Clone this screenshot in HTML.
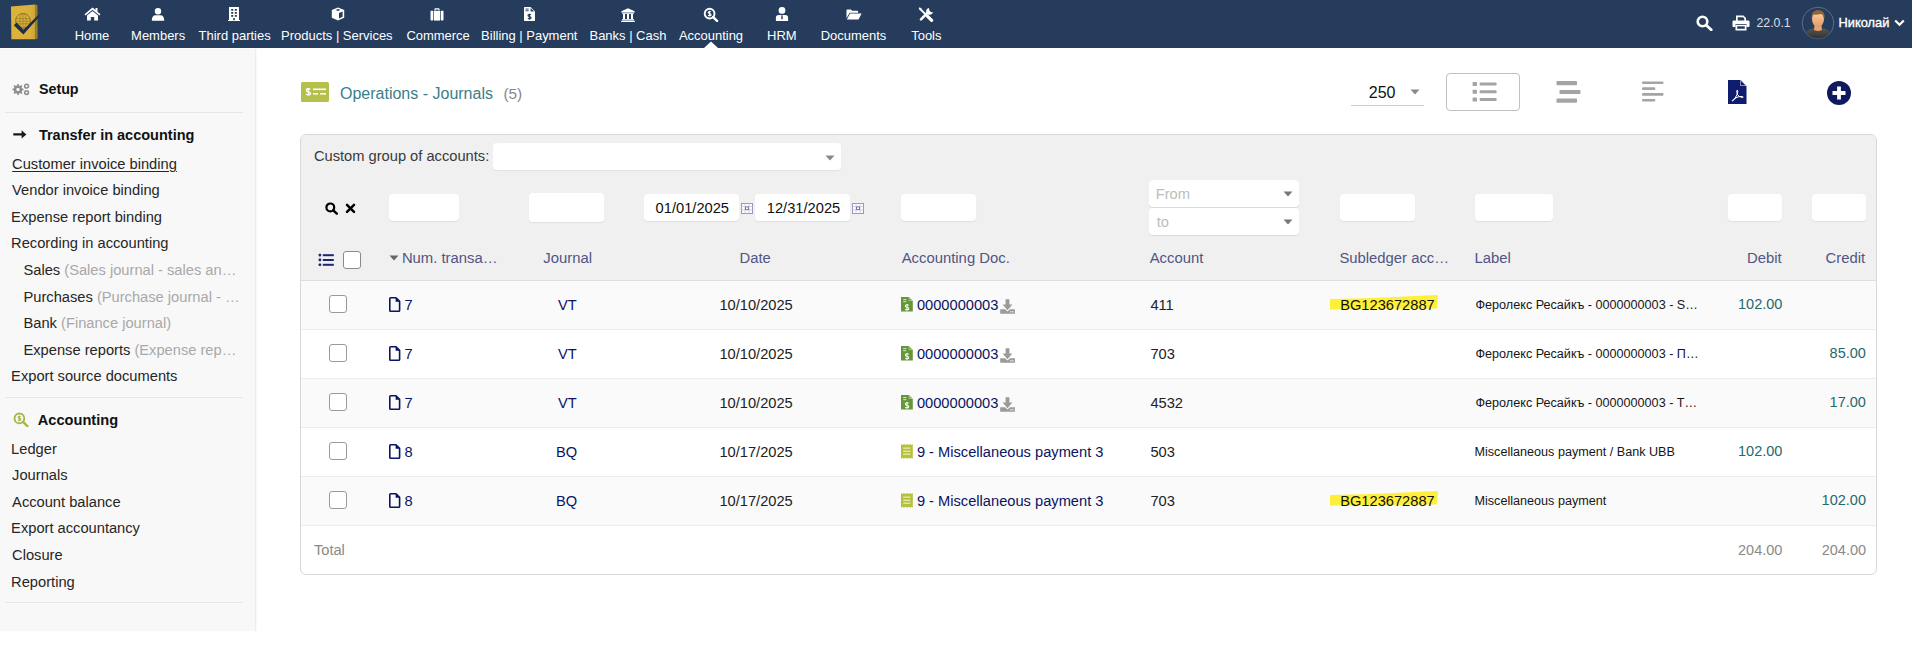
<!DOCTYPE html><html><head><meta charset="utf-8"><style>body{margin:0;width:1912px;height:645px;overflow:hidden;background:#fff;position:relative;font-family:'Liberation Sans', sans-serif} .t{position:absolute;line-height:1;white-space:nowrap}</style></head><body>
<div style="position:absolute;left:0px;top:0px;width:1912px;height:48px;background:#263c5c"></div>
<div style="position:absolute;left:0px;top:49px;width:255px;height:582px;background:#f8f8f8;border-right:1px solid #ececec;box-shadow:1px 0 2px rgba(0,0,0,0.03)"></div>
<svg style="position:absolute;left:9px;top:3px;" width="33" height="38" viewBox="0 0 33 38">
<defs><linearGradient id="lg1" x1="0" y1="0" x2="1" y2="0"><stop offset="0" stop-color="#dcb43c"/><stop offset="0.8" stop-color="#d8b03a"/><stop offset="1" stop-color="#c9a334"/></linearGradient></defs>
<path d="M2 3.6 L26 1.4 L26.4 36.2 L2.4 36.3 Z" fill="url(#lg1)"/>
<path d="M26 1.4 L28.4 2 L28.6 35.6 L26.4 36.2 Z" fill="#9b8431"/>
<circle cx="14" cy="17.8" r="7.4" fill="none" stroke="#8a6c22" stroke-width="0.9"/>
<ellipse cx="14" cy="17.8" rx="3.2" ry="7.4" fill="none" stroke="#9b7a2a" stroke-width="0.7"/>
<path d="M14 10.4 V25.2 M6.8 15.6 H21.2 M6.6 18.2 H21.4 M7 20.8 H21" stroke="#9b7a2a" stroke-width="0.7" fill="none"/>
<path d="M4.8 22.2 L14.4 31.6 L31.4 12.6 L29.4 11.8 L14.4 26.8 L7.6 19.6 Z" fill="#1e2e4a"/>
</svg>
<svg style="position:absolute;left:84px;top:7px;" width="17" height="14" viewBox="0 0 17 14"><path fill="#fff" d="M8.5 0.5 L0.5 7.2 L1.6 8.4 L8.5 2.7 L15.4 8.4 L16.5 7.2 L13.5 4.7 L13.5 1 L11.5 1 L11.5 3 Z"/><path fill="#fff" d="M3 8.6 L8.5 4 L14 8.6 L14 13.5 L10.2 13.5 L10.2 10 L6.8 10 L6.8 13.5 L3 13.5 Z"/></svg>
<svg style="position:absolute;left:151px;top:8px;" width="14" height="13" viewBox="0 0 14 13"><circle fill="#fff" cx="7" cy="3.2" r="3.2"/><path fill="#fff" d="M0.8 12.8 Q0.8 7.3 4.6 7.3 L9.4 7.3 Q13.2 7.3 13.2 12.8 Z"/></svg>
<svg style="position:absolute;left:228px;top:7px;" width="12" height="14" viewBox="0 0 12 14"><path fill="#fff" d="M1 0 H11 V13 H12 V14 H0 V13 H1 Z"/><g fill="#263c5c"><rect x="3.2" y="2" width="2" height="1.8"/><rect x="6.8" y="2" width="2" height="1.8"/><rect x="3.2" y="5" width="2" height="1.8"/><rect x="6.8" y="5" width="2" height="1.8"/><rect x="3.2" y="8" width="2" height="1.8"/><rect x="6.8" y="8" width="2" height="1.8"/><rect x="5.2" y="11" width="1.6" height="2.2"/></g></svg>
<svg style="position:absolute;left:331px;top:7px;" width="14" height="14" viewBox="0 0 14 14"><path fill="#fff" d="M7 0.4 L13.2 3 L13.2 10.8 L7 13.6 L0.8 10.8 L0.8 3 Z"/><path fill="#263c5c" d="M4.6 2.9 L7 1.9 L9.4 2.9 L7 3.9 Z"/><path fill="#263c5c" d="M8 6 L11.6 4.4 L11.6 9.8 L8 11.6 Z"/></svg>
<svg style="position:absolute;left:430px;top:8px;" width="14" height="13" viewBox="0 0 14 13"><path fill="#fff" d="M4.5 2.5 V1 Q4.5 0.3 5.2 0.3 H8.8 Q9.5 0.3 9.5 1 V2.5 H8.4 V1.4 H5.6 V2.5 Z"/><rect fill="#fff" x="0.5" y="2.8" width="2.8" height="9.8" rx="0.8"/><rect fill="#fff" x="4" y="2.8" width="6" height="9.8"/><rect fill="#fff" x="10.7" y="2.8" width="2.8" height="9.8" rx="0.8"/></svg>
<svg style="position:absolute;left:524px;top:7px;" width="11" height="14" viewBox="0 0 11 14"><path fill="#fff" d="M0 0.8 Q0 0 0.8 0 H6.6 L11 4.4 V13.2 Q11 14 10.2 14 H0.8 Q0 14 0 13.2 Z"/><path fill="#263c5c" d="M6.6 0 V4.4 H11 L10 4.4 L6.6 1 Z"/><g fill="#263c5c"><rect x="1.5" y="1.6" width="3.2" height="0.9"/><rect x="1.5" y="3.3" width="3.2" height="0.9"/></g><path d="M6.96 7.81 Q6.34 7.36 5.50 7.36 Q4.04 7.36 4.04 8.42 Q4.04 9.26 5.50 9.60 Q7.07 9.94 7.07 10.83 Q7.07 11.84 5.50 11.84 Q4.55 11.84 3.93 11.34" fill="none" stroke="#263c5c" stroke-width="1.2"/><path d="M5.50 6.80 V12.40" stroke="#263c5c" stroke-width="1.08"/></svg>
<svg style="position:absolute;left:621px;top:8px;" width="14" height="14" viewBox="0 0 14 14"><path fill="#fff" d="M7 0.3 L13.6 3.2 V4.4 H0.4 V3.2 Z"/><rect fill="#fff" x="1.2" y="4.8" width="11.6" height="1"/><rect fill="#fff" x="2" y="6" width="2" height="5"/><rect fill="#fff" x="6" y="6" width="2" height="5"/><rect fill="#fff" x="10" y="6" width="2" height="5"/><rect fill="#fff" x="1" y="11.2" width="12" height="1.2"/><rect fill="#fff" x="0.2" y="12.7" width="13.6" height="1.3"/></svg>
<svg style="position:absolute;left:703px;top:7px;" width="16" height="15" viewBox="0 0 16 15"><circle cx="6.6" cy="6.6" r="4.9" fill="none" stroke="#fff" stroke-width="1.9"/><path d="M10.2 10.2 L14 13.8" stroke="#fff" stroke-width="2.5" stroke-linecap="round"/><path d="M8.00 4.87 Q7.41 4.44 6.60 4.44 Q5.20 4.44 5.20 5.47 Q5.20 6.28 6.60 6.60 Q8.11 6.92 8.11 7.79 Q8.11 8.76 6.60 8.76 Q5.68 8.76 5.09 8.27" fill="none" stroke="#fff" stroke-width="1.1"/><path d="M6.60 3.90 V9.30" stroke="#fff" stroke-width="0.99"/></svg>
<svg style="position:absolute;left:704px;top:41px;" width="14" height="7" viewBox="0 0 14 7"><path d="M0 7 L7 0.5 L14 7 Z" fill="#fff"/></svg>
<svg style="position:absolute;left:775px;top:7px;" width="14" height="14" viewBox="0 0 14 14"><circle fill="#fff" cx="7" cy="3.4" r="3.4"/><path fill="#fff" d="M0.9 13.9 V10.6 Q0.9 7.9 3.8 7.9 H10.2 Q13.1 7.9 13.1 10.6 V13.9 Z"/><path fill="#263c5c" d="M6.4 8.2 H7.6 L7.8 11.6 L7 12.6 L6.2 11.6 Z"/></svg>
<svg style="position:absolute;left:846px;top:9px;" width="16" height="11" viewBox="0 0 16 11"><path fill="#fff" d="M0.5 1.2 Q0.5 0.4 1.3 0.4 H4.9 L6.1 1.7 H11.4 Q12.1 1.7 12.1 2.4 V3.7 H3.6 L0.5 9.2 Z"/><path fill="#fff" d="M4 4.6 H15.6 L12.5 10.4 H0.9 Z"/></svg>
<svg style="position:absolute;left:918px;top:7px;" width="16" height="15" viewBox="0 0 16 15"><path d="M2.2 2 L8.6 8.4" stroke="#fff" stroke-width="1.9" stroke-linecap="round"/><path d="M0.6 1.2 L1.6 0.3 L3.6 1.6 L2 3.2 Z" fill="#fff"/><path d="M9.6 9.4 L13.6 13.4" stroke="#fff" stroke-width="3.2" stroke-linecap="round"/><path d="M3 12.4 L10.4 5" stroke="#fff" stroke-width="2.6" stroke-linecap="round"/><path fill="#fff" d="M10.9 1.1 A3.4 3.4 0 1 0 14.9 5.1 L13.1 5.3 L11.4 3.6 Z"/></svg>
<svg style="position:absolute;left:1696px;top:15px;" width="17" height="16" viewBox="0 0 17 16"><circle cx="6.5" cy="6.5" r="4.8" fill="none" stroke="#fff" stroke-width="2.6"/><path d="M10.3 10.3 L15.2 14.8" stroke="#fff" stroke-width="2.8" stroke-linecap="round"/></svg>
<svg style="position:absolute;left:1732px;top:15px;" width="18" height="16" viewBox="0 0 18 16"><path fill="#fff" d="M4 0.5 H11.5 L14 3 V6 H12.3 V3.5 L11 2.2 H5.7 V6 H4 Z"/><path fill="#fff" d="M1.8 5.5 H16.2 Q17.5 5.5 17.5 6.8 V11.2 Q17.5 12 16.7 12 H14.5 V9 H3.5 V12 H1.3 Q0.5 12 0.5 11.2 V6.8 Q0.5 5.5 1.8 5.5 Z"/><path fill="#fff" d="M3.5 9.8 H14.5 V15.5 H3.5 Z"/><path fill="#263c5c" d="M5.2 11.3 H12.8 V13.8 H5.2 Z"/></svg>
<svg style="position:absolute;left:1801px;top:6px;" width="34" height="34" viewBox="0 0 34 34">
<defs><clipPath id="avc"><circle cx="17" cy="17" r="15.5"/></clipPath>
<linearGradient id="skin" x1="0" y1="0" x2="0" y2="1"><stop offset="0" stop-color="#ffd2a8"/><stop offset="1" stop-color="#e49a62"/></linearGradient>
<linearGradient id="body" x1="0" y1="0" x2="0" y2="1"><stop offset="0" stop-color="#555"/><stop offset="1" stop-color="#2b2b2b"/></linearGradient></defs>
<circle cx="17" cy="17" r="15.8" fill="#263c5c" stroke="#5a6d8a" stroke-width="1"/>
<g clip-path="url(#avc)">
<path d="M3 34 Q3 24 11 22.5 L23 22.5 Q31 24 31 34 Z" fill="url(#body)"/>
<path d="M13.5 19 L20.5 19 L21 24 Q17 26 13 24 Z" fill="#e6a06a"/>
<ellipse cx="17" cy="13" rx="6" ry="8" fill="url(#skin)"/>
<path d="M10.5 12 Q10 5 16 4 Q23 3.5 23.8 10 Q23.5 12 23 13 Q22.5 8.5 20 8 Q15 9 12 8.5 Q11 10 10.9 13 Z" fill="#8d6636"/>
</g></svg>
<svg style="position:absolute;left:1894px;top:19px;" width="11" height="8" viewBox="0 0 11 8"><path d="M1.2 1.5 L5.5 5.8 L9.8 1.5" fill="none" stroke="#fff" stroke-width="2.2"/></svg>
<div class="t" style="left:74.70px;top:29.00px;font-size:12.98px;font-weight:400;color:#ffffff;">Home</div>
<div class="t" style="left:131.10px;top:29.00px;font-size:12.98px;font-weight:400;color:#ffffff;">Members</div>
<div class="t" style="left:198.60px;top:29.00px;font-size:12.98px;font-weight:400;color:#ffffff;">Third parties</div>
<div class="t" style="left:281.10px;top:29.00px;font-size:12.98px;font-weight:400;color:#ffffff;">Products | Services</div>
<div class="t" style="left:406.40px;top:29.00px;font-size:12.98px;font-weight:400;color:#ffffff;">Commerce</div>
<div class="t" style="left:481.10px;top:29.00px;font-size:12.98px;font-weight:400;color:#ffffff;">Billing | Payment</div>
<div class="t" style="left:589.50px;top:29.00px;font-size:12.98px;font-weight:400;color:#ffffff;">Banks | Cash</div>
<div class="t" style="left:678.90px;top:29.00px;font-size:12.98px;font-weight:400;color:#ffffff;">Accounting</div>
<div class="t" style="left:767.10px;top:29.00px;font-size:12.98px;font-weight:400;color:#ffffff;">HRM</div>
<div class="t" style="left:820.70px;top:29.00px;font-size:12.98px;font-weight:400;color:#ffffff;">Documents</div>
<div class="t" style="left:911.20px;top:29.00px;font-size:12.98px;font-weight:400;color:#ffffff;">Tools</div>
<div class="t" style="left:1756.50px;top:17.00px;font-size:12.3px;font-weight:400;color:rgba(255,255,255,0.85);">22.0.1</div>
<div class="t" style="left:1838.60px;top:17.00px;font-size:12.8px;font-weight:400;color:#ffffff;-webkit-text-stroke:0.35px #fff">Николай</div>
<svg style="position:absolute;left:12px;top:83px;" width="18" height="14" viewBox="0 0 18 14"><path d="M10.10 5.60 L11.55 5.78 L11.55 7.22 L10.10 7.40 L9.54 8.76 L10.44 9.91 L9.41 10.94 L8.26 10.04 L6.90 10.60 L6.72 12.05 L5.28 12.05 L5.10 10.60 L3.74 10.04 L2.59 10.94 L1.56 9.91 L2.46 8.76 L1.90 7.40 L0.45 7.22 L0.45 5.78 L1.90 5.60 L2.46 4.24 L1.56 3.09 L2.59 2.06 L3.74 2.96 L5.10 2.40 L5.28 0.95 L6.72 0.95 L6.90 2.40 L8.26 2.96 L9.41 2.06 L10.44 3.09 L9.54 4.24 Z" fill="#8c8c8c"/><circle cx="6" cy="6.5" r="1.7" fill="#f8f8f8"/><circle cx="14.6" cy="3.2" r="1.9" fill="none" stroke="#8c8c8c" stroke-width="1.5"/><circle cx="14.6" cy="9.6" r="1.9" fill="none" stroke="#8c8c8c" stroke-width="1.5"/></svg>
<div class="t" style="left:38.90px;top:82.00px;font-size:14.3px;font-weight:700;color:#111;">Setup</div>
<div style="position:absolute;left:5px;top:112px;width:238px;height:1px;background:#e6e6e6"></div>
<svg style="position:absolute;left:13px;top:130px;" width="14" height="9" viewBox="0 0 14 9"><path d="M0.3 3.3 H8.6 V0.3 L13.4 4.4 L8.6 8.5 V5.5 H0.3 Z" fill="#1a1a1a"/></svg>
<div class="t" style="left:38.90px;top:128.00px;font-size:14.5px;font-weight:700;color:#111;">Transfer in accounting</div>
<div class="t" style="left:12.10px;top:157.00px;font-size:14.68px;font-weight:400;color:#262626;text-decoration:underline;text-underline-offset:2px">Customer invoice binding</div>
<div class="t" style="left:12.10px;top:183.00px;font-size:14.68px;font-weight:400;color:#262626;">Vendor invoice binding</div>
<div class="t" style="left:11.10px;top:210.00px;font-size:14.68px;font-weight:400;color:#262626;">Expense report binding</div>
<div class="t" style="left:11.10px;top:236.00px;font-size:14.68px;font-weight:400;color:#262626;">Recording in accounting</div>
<div class="t" style="left:23.50px;top:263.00px;font-size:14.68px;font-weight:400;color:#262626;">Sales <span style="color:#a8a8a8">(Sales journal - sales an…</span></div>
<div class="t" style="left:23.50px;top:290.00px;font-size:14.68px;font-weight:400;color:#262626;">Purchases <span style="color:#a8a8a8">(Purchase journal - …</span></div>
<div class="t" style="left:23.50px;top:316.00px;font-size:14.68px;font-weight:400;color:#262626;">Bank <span style="color:#a8a8a8">(Finance journal)</span></div>
<div class="t" style="left:23.50px;top:343.00px;font-size:14.68px;font-weight:400;color:#262626;">Expense reports <span style="color:#a8a8a8">(Expense rep…</span></div>
<div class="t" style="left:11.10px;top:369.00px;font-size:14.68px;font-weight:400;color:#262626;">Export source documents</div>
<div style="position:absolute;left:5px;top:397px;width:238px;height:1px;background:#e6e6e6"></div>
<svg style="position:absolute;left:12.5px;top:411.5px;" width="16" height="15" viewBox="0 0 17 16"><circle cx="6.8" cy="6.8" r="5.2" fill="none" stroke="#a3b84a" stroke-width="2"/><path d="M10.6 10.6 L15.3 15" stroke="#a3b84a" stroke-width="2.6" stroke-linecap="round"/><path d="M8.26 5.01 Q7.64 4.56 6.80 4.56 Q5.34 4.56 5.34 5.62 Q5.34 6.46 6.80 6.80 Q8.37 7.14 8.37 8.03 Q8.37 9.04 6.80 9.04 Q5.85 9.04 5.23 8.54" fill="none" stroke="#a3b84a" stroke-width="1.1"/><path d="M6.80 4.00 V9.60" stroke="#a3b84a" stroke-width="0.99"/></svg>
<div class="t" style="left:37.80px;top:413.00px;font-size:14.6px;font-weight:700;color:#111;">Accounting</div>
<div class="t" style="left:11.10px;top:442.00px;font-size:14.68px;font-weight:400;color:#262626;">Ledger</div>
<div class="t" style="left:12.10px;top:468.00px;font-size:14.68px;font-weight:400;color:#262626;">Journals</div>
<div class="t" style="left:12.10px;top:495.00px;font-size:14.68px;font-weight:400;color:#262626;">Account balance</div>
<div class="t" style="left:11.10px;top:521.00px;font-size:14.68px;font-weight:400;color:#262626;">Export accountancy</div>
<div class="t" style="left:12.10px;top:548.00px;font-size:14.68px;font-weight:400;color:#262626;">Closure</div>
<div class="t" style="left:11.10px;top:575.00px;font-size:14.68px;font-weight:400;color:#262626;">Reporting</div>
<div style="position:absolute;left:5px;top:602px;width:238px;height:1px;background:#e6e6e6"></div>
<svg style="position:absolute;left:301px;top:82px;" width="28" height="20" viewBox="0 0 28 20"><rect x="0" y="0" width="28" height="20" rx="1.5" fill="#b5c04a"/><path d="M9.28 7.37 Q8.44 6.76 7.30 6.76 Q5.32 6.76 5.32 8.20 Q5.32 9.34 7.30 9.80 Q9.43 10.26 9.43 11.47 Q9.43 12.84 7.30 12.84 Q6.01 12.84 5.17 12.16" fill="none" stroke="#fff" stroke-width="1.35"/><path d="M7.30 6.00 V13.60" stroke="#fff" stroke-width="1.22"/><rect x="12" y="6.5" width="13" height="1.6" fill="#fff"/><rect x="12" y="11" width="5" height="1.6" fill="#fff"/><rect x="19" y="11" width="6" height="1.6" fill="#fff"/></svg>
<div class="t" style="left:340.00px;top:85.50px;font-size:16px;font-weight:400;color:#3a7e88;">Operations - Journals</div>
<div class="t" style="left:503.40px;top:85.50px;font-size:15.4px;font-weight:400;color:#888;">(5)</div>
<div class="t" style="left:1368.80px;top:85.00px;font-size:16px;font-weight:400;color:#111;">250</div>
<svg style="position:absolute;left:1410px;top:89px;" width="10" height="6" viewBox="0 0 10 6"><path d="M0.5 0.5 H9.5 L5 5.5 Z" fill="#888"/></svg>
<div style="position:absolute;left:1351px;top:105px;width:73px;height:1px;background:#ccc"></div>
<div style="position:absolute;left:1446px;top:73px;width:72px;height:36px;border:1px solid #c0c0c0;border-radius:4px;background:#fff"></div>
<svg style="position:absolute;left:1472px;top:82px;" width="26" height="20" viewBox="0 0 26 20"><g fill="#a4a4a4"><rect x="0.6" y="0" width="4.4" height="3.9" rx="0.6"/><rect x="0.6" y="7.8" width="4.4" height="3.9" rx="0.6"/><rect x="0.6" y="15.6" width="4.4" height="3.9" rx="0.6"/><rect x="7.6" y="0.6" width="17" height="3" rx="0.8"/><rect x="7.6" y="8.2" width="17" height="3" rx="0.8"/><rect x="7.6" y="16" width="17" height="3" rx="0.8"/></g></svg>
<svg style="position:absolute;left:1556px;top:81px;" width="25" height="22" viewBox="0 0 25 22"><g fill="#a4a4a4"><rect x="0.5" y="0" width="20.5" height="4.2" rx="0.8"/><rect x="3.5" y="9" width="21" height="4" rx="0.8"/><rect x="0.5" y="17.5" width="20.5" height="4.2" rx="0.8"/></g></svg>
<svg style="position:absolute;left:1642px;top:81px;" width="22" height="22" viewBox="0 0 22 22"><g fill="#a4a4a4"><rect x="0" y="0.5" width="21.5" height="2.6" rx="1"/><rect x="0" y="6.3" width="13.3" height="2.6" rx="1"/><rect x="0" y="12.1" width="21.5" height="2.6" rx="1"/><rect x="0" y="18" width="13.3" height="2.6" rx="1"/></g></svg>
<svg style="position:absolute;left:1728px;top:80px;" width="19" height="24" viewBox="0 0 19 24"><path d="M0 0 H12.5 L18.5 6 V24 H0 Z" fill="#0f1c6e"/><path d="M12.5 0 V6 H18.5 Z" fill="#fff"/><path d="M13 0.8 V5.5 H17.7 Z" fill="#0f1c6e"/><path d="M9.3 10 Q8.2 10.2 9.2 14.2 Q10.5 17 14.5 17.6 Q15.6 17.6 14.8 16.6 Q12 16 9 17.3 Q4.8 19.5 4.2 20.6 Q4 21.4 5 20.8 Q7 19 9.3 14 Q10.3 10.5 9.3 10 Z" fill="none" stroke="#fff" stroke-width="1"/></svg>
<svg style="position:absolute;left:1827px;top:81px;" width="25" height="25" viewBox="0 0 25 25"><circle cx="12" cy="12" r="12" fill="#0f1a5e"/><path d="M12 5.5 V18.5 M5.5 12 H18.5" stroke="#fff" stroke-width="3.8"/></svg>
<div style="position:absolute;left:300px;top:134px;width:1575px;height:439px;border:1px solid #d8d8d8;border-radius:6px;background:#fff;box-sizing:content-box"></div>
<div style="position:absolute;left:301px;top:135px;width:1575px;height:145px;background:#f0f0f0;border-radius:5px 5px 0 0"></div>
<div style="position:absolute;left:301px;top:280px;width:1575px;height:1px;background:#dedede"></div>
<div class="t" style="left:313.90px;top:149.00px;font-size:14.68px;font-weight:400;color:#3a3a3a;">Custom group of accounts:</div>
<div style="position:absolute;left:493px;top:143px;width:348px;height:27px;background:#fff;border-radius:4px;box-shadow:0 1px 1px rgba(0,0,0,0.06)"></div>
<svg style="position:absolute;left:825px;top:155px;" width="10" height="6" viewBox="0 0 10 6"><path d="M0.5 0.5 H9.5 L5 5.5 Z" fill="#888"/></svg>
<svg style="position:absolute;left:325px;top:202px;" width="14" height="14" viewBox="0 0 14 14"><circle cx="5.3" cy="5.4" r="3.9" fill="none" stroke="#000" stroke-width="2.2"/><path d="M8.3 8.4 L11.8 11.6" stroke="#000" stroke-width="2.5" stroke-linecap="round"/></svg>
<svg style="position:absolute;left:345px;top:203px;" width="11" height="11" viewBox="0 0 11 11"><path d="M2 1.8 L9 8.8 M9 1.8 L2 8.8" stroke="#000" stroke-width="2.5" stroke-linecap="round"/></svg>
<div style="position:absolute;left:389px;top:194px;width:70px;height:27px;background:#fff;border-radius:4px;box-shadow:0 1px 1px rgba(0,0,0,0.07)"></div>
<div style="position:absolute;left:529px;top:193px;width:75px;height:29px;background:#fff;border-radius:4px;box-shadow:0 1px 1px rgba(0,0,0,0.07)"></div>
<div style="position:absolute;left:644px;top:194px;width:95px;height:27px;background:#fff;border-radius:4px;box-shadow:0 1px 1px rgba(0,0,0,0.07)"></div>
<div class="t" style="left:655.60px;top:201.00px;font-size:14.68px;font-weight:400;color:#111;">01/01/2025</div>
<div style="position:absolute;left:755px;top:194px;width:95px;height:27px;background:#fff;border-radius:4px;box-shadow:0 1px 1px rgba(0,0,0,0.07)"></div>
<div class="t" style="left:766.80px;top:201.00px;font-size:14.68px;font-weight:400;color:#111;">12/31/2025</div>
<svg style="position:absolute;left:741px;top:203px;" width="12" height="11" viewBox="0 0 12 11"><rect x="0.5" y="0.5" width="11" height="10" fill="#fff" stroke="#9a96b8" stroke-width="1"/><path d="M0.5 3.5 H11.5 M0.5 7 H11.5 M4 0.5 V10.5 M8 0.5 V10.5" stroke="#c6c2dc" stroke-width="0.8"/><rect x="4" y="3.5" width="4" height="3.5" fill="#7d76a8"/><rect x="5" y="4.4" width="2" height="1.7" fill="#fff"/></svg>
<svg style="position:absolute;left:852px;top:203px;" width="12" height="11" viewBox="0 0 12 11"><rect x="0.5" y="0.5" width="11" height="10" fill="#fff" stroke="#9a96b8" stroke-width="1"/><path d="M0.5 3.5 H11.5 M0.5 7 H11.5 M4 0.5 V10.5 M8 0.5 V10.5" stroke="#c6c2dc" stroke-width="0.8"/><rect x="4" y="3.5" width="4" height="3.5" fill="#7d76a8"/><rect x="5" y="4.4" width="2" height="1.7" fill="#fff"/></svg>
<div style="position:absolute;left:901px;top:194px;width:75px;height:27px;background:#fff;border-radius:4px;box-shadow:0 1px 1px rgba(0,0,0,0.07)"></div>
<div style="position:absolute;left:1149px;top:180px;width:150px;height:27px;background:#fff;border-radius:4px;box-shadow:0 1px 1px rgba(0,0,0,0.10)"></div>
<div style="position:absolute;left:1149px;top:208px;width:150px;height:27px;background:#fff;border-radius:4px;box-shadow:0 1px 1px rgba(0,0,0,0.10)"></div>
<div class="t" style="left:1155.70px;top:187.00px;font-size:14.68px;font-weight:400;color:#bdbdbd;">From</div>
<div class="t" style="left:1156.70px;top:215.00px;font-size:14.68px;font-weight:400;color:#bdbdbd;">to</div>
<svg style="position:absolute;left:1283px;top:191px;" width="10" height="6" viewBox="0 0 10 6"><path d="M0.5 0.5 H9.5 L5 5.5 Z" fill="#777"/></svg>
<svg style="position:absolute;left:1283px;top:219px;" width="10" height="6" viewBox="0 0 10 6"><path d="M0.5 0.5 H9.5 L5 5.5 Z" fill="#777"/></svg>
<div style="position:absolute;left:1340px;top:194px;width:75px;height:27px;background:#fff;border-radius:4px;box-shadow:0 1px 1px rgba(0,0,0,0.07)"></div>
<div style="position:absolute;left:1475px;top:194px;width:78px;height:27px;background:#fff;border-radius:4px;box-shadow:0 1px 1px rgba(0,0,0,0.07)"></div>
<div style="position:absolute;left:1728px;top:194px;width:54px;height:27px;background:#fff;border-radius:4px;box-shadow:0 1px 1px rgba(0,0,0,0.07)"></div>
<div style="position:absolute;left:1812px;top:194px;width:54px;height:27px;background:#fff;border-radius:4px;box-shadow:0 1px 1px rgba(0,0,0,0.07)"></div>
<svg style="position:absolute;left:318px;top:253px;" width="17" height="14" viewBox="0 0 17 14"><g fill="#1c2870"><rect x="0.6" y="0.8" width="2.6" height="2.6" rx="0.8"/><rect x="0.6" y="5.6" width="2.6" height="2.6" rx="0.8"/><rect x="0.6" y="10.4" width="2.6" height="2.6" rx="0.8"/><rect x="4.8" y="1.2" width="11" height="2"/><rect x="4.8" y="6" width="11" height="2"/><rect x="4.8" y="10.8" width="11" height="2"/></g></svg>
<div style="position:absolute;left:343px;top:251px;width:16px;height:16px;border:1.5px solid #8a8a8a;border-radius:3px;background:#fff;box-sizing:content-box"></div>
<svg style="position:absolute;left:389px;top:255px;" width="10" height="6" viewBox="0 0 10 6"><path d="M0.5 0.5 H9.5 L5 5.5 Z" fill="#666"/></svg>
<div class="t" style="left:401.90px;top:251.30px;font-size:14.85px;font-weight:400;color:#505584;">Num. transa…</div>
<div class="t" style="left:543.30px;top:251.30px;font-size:14.85px;font-weight:400;color:#505584;">Journal</div>
<div class="t" style="left:739.50px;top:251.30px;font-size:14.85px;font-weight:400;color:#505584;">Date</div>
<div class="t" style="left:901.70px;top:251.30px;font-size:14.85px;font-weight:400;color:#505584;">Accounting Doc.</div>
<div class="t" style="left:1149.70px;top:251.30px;font-size:14.85px;font-weight:400;color:#505584;">Account</div>
<div class="t" style="left:1339.40px;top:251.30px;font-size:14.85px;font-weight:400;color:#505584;">Subledger acc…</div>
<div class="t" style="left:1474.40px;top:251.30px;font-size:14.85px;font-weight:400;color:#505584;">Label</div>
<div class="t" style="left:1747.00px;top:251.30px;font-size:14.85px;font-weight:400;color:#505584;">Debit</div>
<div class="t" style="left:1825.60px;top:251.30px;font-size:14.85px;font-weight:400;color:#505584;">Credit</div>
<div style="position:absolute;left:301px;top:281px;width:1575px;height:48px;background:#fafafa"></div>
<div style="position:absolute;left:301px;top:329px;width:1575px;height:1px;background:#ececec"></div>
<div style="position:absolute;left:329px;top:295px;width:16px;height:16px;border:1.5px solid #9a9a9a;border-radius:3px;background:#fff;box-sizing:content-box"></div>
<svg style="position:absolute;left:389px;top:297px;" width="12" height="15" viewBox="0 0 12 15"><path d="M1.6 0.8 H7 L10.6 4.4 V13.4 Q10.6 14.2 9.8 14.2 H1.6 Q0.8 14.2 0.8 13.4 V1.6 Q0.8 0.8 1.6 0.8 Z" fill="none" stroke="#0a1464" stroke-width="1.6" stroke-linejoin="round"/><path d="M6.6 0.8 V4.8 H10.6 Z" fill="#0a1464"/></svg>
<div class="t" style="left:404.50px;top:298.00px;font-size:14.66px;font-weight:400;color:#0a1464;">7</div>
<div class="t" style="left:558.00px;top:298.00px;font-size:14.66px;font-weight:400;color:#0a1464;">VT</div>
<div class="t" style="left:719.40px;top:298.00px;font-size:14.66px;font-weight:400;color:#222;">10/10/2025</div>
<svg style="position:absolute;left:901px;top:297px;" width="12" height="15" viewBox="0 0 12 15"><path d="M0 0 H7.8 L11.8 4 V14.6 H0 Z" fill="#65963a"/><path d="M7.8 0.2 V4 H11.6 Z" fill="#d4e4c0"/><path d="M8.4 1 V3.4 H10.8 Z" fill="#65963a"/><rect x="2.2" y="2" width="3.2" height="1.1" fill="#cfe2b8"/><rect x="2.2" y="4.1" width="3.2" height="1.1" fill="#cfe2b8"/><path d="M7.66 8.25 Q6.96 7.74 6.00 7.74 Q4.34 7.74 4.34 8.96 Q4.34 9.92 6.00 10.30 Q7.79 10.68 7.79 11.71 Q7.79 12.86 6.00 12.86 Q4.91 12.86 4.21 12.28" fill="none" stroke="#fff" stroke-width="1.05"/><path d="M6.00 7.10 V13.50" stroke="#fff" stroke-width="0.95"/></svg>
<div class="t" style="left:916.90px;top:298.00px;font-size:14.66px;font-weight:400;color:#0a1464;">0000000003</div>
<svg style="position:absolute;left:1000px;top:299px;" width="15" height="16" viewBox="0 0 15 16"><path d="M5.6 0.2 H9.4 V5.6 H12.4 L7.5 11.2 L2.6 5.6 H5.6 Z" fill="#9a9a9a"/><path d="M0.2 10.2 H5 L7.5 12.6 L10 10.2 H14.9 V14.7 H0.2 Z" fill="#9a9a9a"/><rect x="10.2" y="12.2" width="1.2" height="1.2" fill="#fff"/><rect x="12.2" y="12.2" width="1.2" height="1.2" fill="#fff"/></svg>
<div class="t" style="left:1150.40px;top:298.00px;font-size:14.66px;font-weight:400;color:#222;">411</div>
<svg style="position:absolute;left:1329px;top:294px;" width="110" height="18" viewBox="0 0 110 18"><path d="M1 5 Q40 4.5 108 1 L109 2 L108 14.5 Q60 15 1 15.5 Z" fill="#ffef3a"/></svg>
<div class="t" style="left:1340.20px;top:298.00px;font-size:14.66px;font-weight:400;color:#111;">BG123672887</div>
<div class="t" style="left:1475.50px;top:299.20px;font-size:12.61px;font-weight:400;color:#161616;">Феролекс Ресайкъ - 0000000003 - S…</div>
<div class="t" style="left:1738.00px;top:297.40px;font-size:14.5px;font-weight:400;color:#246a6e;">102.00</div>
<div style="position:absolute;left:301px;top:330px;width:1575px;height:48px;background:#ffffff"></div>
<div style="position:absolute;left:301px;top:378px;width:1575px;height:1px;background:#ececec"></div>
<div style="position:absolute;left:329px;top:344px;width:16px;height:16px;border:1.5px solid #9a9a9a;border-radius:3px;background:#fff;box-sizing:content-box"></div>
<svg style="position:absolute;left:389px;top:346px;" width="12" height="15" viewBox="0 0 12 15"><path d="M1.6 0.8 H7 L10.6 4.4 V13.4 Q10.6 14.2 9.8 14.2 H1.6 Q0.8 14.2 0.8 13.4 V1.6 Q0.8 0.8 1.6 0.8 Z" fill="none" stroke="#0a1464" stroke-width="1.6" stroke-linejoin="round"/><path d="M6.6 0.8 V4.8 H10.6 Z" fill="#0a1464"/></svg>
<div class="t" style="left:404.50px;top:347.00px;font-size:14.66px;font-weight:400;color:#0a1464;">7</div>
<div class="t" style="left:558.00px;top:347.00px;font-size:14.66px;font-weight:400;color:#0a1464;">VT</div>
<div class="t" style="left:719.40px;top:347.00px;font-size:14.66px;font-weight:400;color:#222;">10/10/2025</div>
<svg style="position:absolute;left:901px;top:346px;" width="12" height="15" viewBox="0 0 12 15"><path d="M0 0 H7.8 L11.8 4 V14.6 H0 Z" fill="#65963a"/><path d="M7.8 0.2 V4 H11.6 Z" fill="#d4e4c0"/><path d="M8.4 1 V3.4 H10.8 Z" fill="#65963a"/><rect x="2.2" y="2" width="3.2" height="1.1" fill="#cfe2b8"/><rect x="2.2" y="4.1" width="3.2" height="1.1" fill="#cfe2b8"/><path d="M7.66 8.25 Q6.96 7.74 6.00 7.74 Q4.34 7.74 4.34 8.96 Q4.34 9.92 6.00 10.30 Q7.79 10.68 7.79 11.71 Q7.79 12.86 6.00 12.86 Q4.91 12.86 4.21 12.28" fill="none" stroke="#fff" stroke-width="1.05"/><path d="M6.00 7.10 V13.50" stroke="#fff" stroke-width="0.95"/></svg>
<div class="t" style="left:916.90px;top:347.00px;font-size:14.66px;font-weight:400;color:#0a1464;">0000000003</div>
<svg style="position:absolute;left:1000px;top:348px;" width="15" height="16" viewBox="0 0 15 16"><path d="M5.6 0.2 H9.4 V5.6 H12.4 L7.5 11.2 L2.6 5.6 H5.6 Z" fill="#9a9a9a"/><path d="M0.2 10.2 H5 L7.5 12.6 L10 10.2 H14.9 V14.7 H0.2 Z" fill="#9a9a9a"/><rect x="10.2" y="12.2" width="1.2" height="1.2" fill="#fff"/><rect x="12.2" y="12.2" width="1.2" height="1.2" fill="#fff"/></svg>
<div class="t" style="left:1150.40px;top:347.00px;font-size:14.66px;font-weight:400;color:#222;">703</div>
<div class="t" style="left:1475.50px;top:348.20px;font-size:12.61px;font-weight:400;color:#161616;">Феролекс Ресайкъ - 0000000003 - П…</div>
<div class="t" style="left:1829.60px;top:346.40px;font-size:14.5px;font-weight:400;color:#246a6e;">85.00</div>
<div style="position:absolute;left:301px;top:379px;width:1575px;height:48px;background:#fafafa"></div>
<div style="position:absolute;left:301px;top:427px;width:1575px;height:1px;background:#ececec"></div>
<div style="position:absolute;left:329px;top:393px;width:16px;height:16px;border:1.5px solid #9a9a9a;border-radius:3px;background:#fff;box-sizing:content-box"></div>
<svg style="position:absolute;left:389px;top:395px;" width="12" height="15" viewBox="0 0 12 15"><path d="M1.6 0.8 H7 L10.6 4.4 V13.4 Q10.6 14.2 9.8 14.2 H1.6 Q0.8 14.2 0.8 13.4 V1.6 Q0.8 0.8 1.6 0.8 Z" fill="none" stroke="#0a1464" stroke-width="1.6" stroke-linejoin="round"/><path d="M6.6 0.8 V4.8 H10.6 Z" fill="#0a1464"/></svg>
<div class="t" style="left:404.50px;top:396.00px;font-size:14.66px;font-weight:400;color:#0a1464;">7</div>
<div class="t" style="left:558.00px;top:396.00px;font-size:14.66px;font-weight:400;color:#0a1464;">VT</div>
<div class="t" style="left:719.40px;top:396.00px;font-size:14.66px;font-weight:400;color:#222;">10/10/2025</div>
<svg style="position:absolute;left:901px;top:395px;" width="12" height="15" viewBox="0 0 12 15"><path d="M0 0 H7.8 L11.8 4 V14.6 H0 Z" fill="#65963a"/><path d="M7.8 0.2 V4 H11.6 Z" fill="#d4e4c0"/><path d="M8.4 1 V3.4 H10.8 Z" fill="#65963a"/><rect x="2.2" y="2" width="3.2" height="1.1" fill="#cfe2b8"/><rect x="2.2" y="4.1" width="3.2" height="1.1" fill="#cfe2b8"/><path d="M7.66 8.25 Q6.96 7.74 6.00 7.74 Q4.34 7.74 4.34 8.96 Q4.34 9.92 6.00 10.30 Q7.79 10.68 7.79 11.71 Q7.79 12.86 6.00 12.86 Q4.91 12.86 4.21 12.28" fill="none" stroke="#fff" stroke-width="1.05"/><path d="M6.00 7.10 V13.50" stroke="#fff" stroke-width="0.95"/></svg>
<div class="t" style="left:916.90px;top:396.00px;font-size:14.66px;font-weight:400;color:#0a1464;">0000000003</div>
<svg style="position:absolute;left:1000px;top:397px;" width="15" height="16" viewBox="0 0 15 16"><path d="M5.6 0.2 H9.4 V5.6 H12.4 L7.5 11.2 L2.6 5.6 H5.6 Z" fill="#9a9a9a"/><path d="M0.2 10.2 H5 L7.5 12.6 L10 10.2 H14.9 V14.7 H0.2 Z" fill="#9a9a9a"/><rect x="10.2" y="12.2" width="1.2" height="1.2" fill="#fff"/><rect x="12.2" y="12.2" width="1.2" height="1.2" fill="#fff"/></svg>
<div class="t" style="left:1150.40px;top:396.00px;font-size:14.66px;font-weight:400;color:#222;">4532</div>
<div class="t" style="left:1475.50px;top:397.20px;font-size:12.61px;font-weight:400;color:#161616;">Феролекс Ресайкъ - 0000000003 - Т…</div>
<div class="t" style="left:1829.60px;top:395.40px;font-size:14.5px;font-weight:400;color:#246a6e;">17.00</div>
<div style="position:absolute;left:301px;top:428px;width:1575px;height:48px;background:#ffffff"></div>
<div style="position:absolute;left:301px;top:476px;width:1575px;height:1px;background:#ececec"></div>
<div style="position:absolute;left:329px;top:442px;width:16px;height:16px;border:1.5px solid #9a9a9a;border-radius:3px;background:#fff;box-sizing:content-box"></div>
<svg style="position:absolute;left:389px;top:444px;" width="12" height="15" viewBox="0 0 12 15"><path d="M1.6 0.8 H7 L10.6 4.4 V13.4 Q10.6 14.2 9.8 14.2 H1.6 Q0.8 14.2 0.8 13.4 V1.6 Q0.8 0.8 1.6 0.8 Z" fill="none" stroke="#0a1464" stroke-width="1.6" stroke-linejoin="round"/><path d="M6.6 0.8 V4.8 H10.6 Z" fill="#0a1464"/></svg>
<div class="t" style="left:404.50px;top:445.00px;font-size:14.66px;font-weight:400;color:#0a1464;">8</div>
<div class="t" style="left:556.00px;top:445.00px;font-size:14.66px;font-weight:400;color:#0a1464;">BQ</div>
<div class="t" style="left:719.40px;top:445.00px;font-size:14.66px;font-weight:400;color:#222;">10/17/2025</div>
<svg style="position:absolute;left:901px;top:444px;" width="12" height="15" viewBox="0 0 12 15"><path d="M0 0 L1.5 0.9 L3 0 L4.5 0.9 L6 0 L7.5 0.9 L9 0 L10.5 0.9 L11.8 0 V14.7 L10.5 13.8 L9 14.7 L7.5 13.8 L6 14.7 L4.5 13.8 L3 14.7 L1.5 13.8 L0 14.7 Z" fill="#b7c03c"/><rect x="2.2" y="3.6" width="7.2" height="1.1" fill="#eef2c8"/><rect x="2.2" y="6.7" width="7.2" height="1.1" fill="#eef2c8"/><rect x="2.2" y="9.6" width="7.2" height="1.1" fill="#eef2c8"/></svg>
<div class="t" style="left:916.90px;top:445.00px;font-size:14.66px;font-weight:400;color:#0a1464;">9 - Miscellaneous payment 3</div>
<div class="t" style="left:1150.40px;top:445.00px;font-size:14.66px;font-weight:400;color:#222;">503</div>
<div class="t" style="left:1474.50px;top:446.20px;font-size:12.61px;font-weight:400;color:#161616;">Miscellaneous payment / Bank UBB</div>
<div class="t" style="left:1738.00px;top:444.40px;font-size:14.5px;font-weight:400;color:#246a6e;">102.00</div>
<div style="position:absolute;left:301px;top:477px;width:1575px;height:48px;background:#fafafa"></div>
<div style="position:absolute;left:301px;top:525px;width:1575px;height:1px;background:#ececec"></div>
<div style="position:absolute;left:329px;top:491px;width:16px;height:16px;border:1.5px solid #9a9a9a;border-radius:3px;background:#fff;box-sizing:content-box"></div>
<svg style="position:absolute;left:389px;top:493px;" width="12" height="15" viewBox="0 0 12 15"><path d="M1.6 0.8 H7 L10.6 4.4 V13.4 Q10.6 14.2 9.8 14.2 H1.6 Q0.8 14.2 0.8 13.4 V1.6 Q0.8 0.8 1.6 0.8 Z" fill="none" stroke="#0a1464" stroke-width="1.6" stroke-linejoin="round"/><path d="M6.6 0.8 V4.8 H10.6 Z" fill="#0a1464"/></svg>
<div class="t" style="left:404.50px;top:494.00px;font-size:14.66px;font-weight:400;color:#0a1464;">8</div>
<div class="t" style="left:556.00px;top:494.00px;font-size:14.66px;font-weight:400;color:#0a1464;">BQ</div>
<div class="t" style="left:719.40px;top:494.00px;font-size:14.66px;font-weight:400;color:#222;">10/17/2025</div>
<svg style="position:absolute;left:901px;top:493px;" width="12" height="15" viewBox="0 0 12 15"><path d="M0 0 L1.5 0.9 L3 0 L4.5 0.9 L6 0 L7.5 0.9 L9 0 L10.5 0.9 L11.8 0 V14.7 L10.5 13.8 L9 14.7 L7.5 13.8 L6 14.7 L4.5 13.8 L3 14.7 L1.5 13.8 L0 14.7 Z" fill="#b7c03c"/><rect x="2.2" y="3.6" width="7.2" height="1.1" fill="#eef2c8"/><rect x="2.2" y="6.7" width="7.2" height="1.1" fill="#eef2c8"/><rect x="2.2" y="9.6" width="7.2" height="1.1" fill="#eef2c8"/></svg>
<div class="t" style="left:916.90px;top:494.00px;font-size:14.66px;font-weight:400;color:#0a1464;">9 - Miscellaneous payment 3</div>
<div class="t" style="left:1150.40px;top:494.00px;font-size:14.66px;font-weight:400;color:#222;">703</div>
<svg style="position:absolute;left:1329px;top:490px;" width="110" height="18" viewBox="0 0 110 18"><path d="M1 5 Q40 4.5 108 1 L109 2 L108 14.5 Q60 15 1 15.5 Z" fill="#ffef3a"/></svg>
<div class="t" style="left:1340.20px;top:494.00px;font-size:14.66px;font-weight:400;color:#111;">BG123672887</div>
<div class="t" style="left:1474.50px;top:495.20px;font-size:12.61px;font-weight:400;color:#161616;">Miscellaneous payment</div>
<div class="t" style="left:1821.60px;top:493.40px;font-size:14.5px;font-weight:400;color:#246a6e;">102.00</div>
<div class="t" style="left:313.90px;top:543.00px;font-size:14.68px;font-weight:400;color:#8a8a8a;">Total</div>
<div class="t" style="left:1738.00px;top:543.00px;font-size:14.5px;font-weight:400;color:#8a8a8a;">204.00</div>
<div class="t" style="left:1821.70px;top:543.00px;font-size:14.5px;font-weight:400;color:#8a8a8a;">204.00</div>
</body></html>
